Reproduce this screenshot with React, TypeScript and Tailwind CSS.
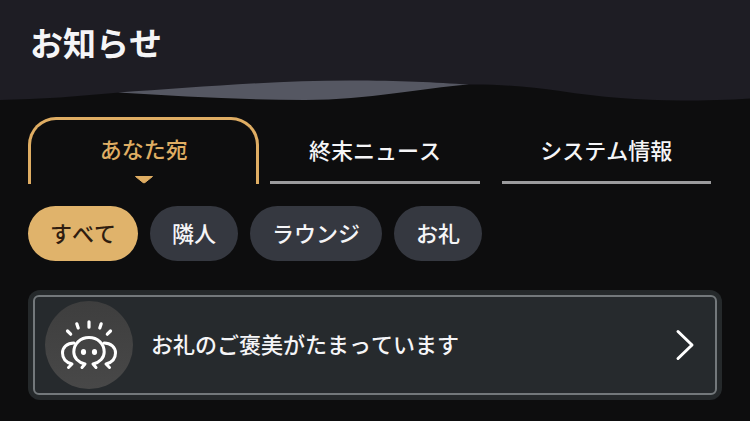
import { useState } from "react";

const tabs = ["あなた宛", "終末ニュース", "システム情報"];
const filters = ["すべて", "隣人", "ラウンジ", "お礼"];

function HeaderWave() {
  return (
    <svg
      className="block h-[22px] w-full"
      viewBox="0 0 750 22"
      preserveAspectRatio="none"
      aria-hidden="true"
    >
      <path
        fill="#1e1d24"
        d="M0 0H750V18.500C730 20 705 20.500 680 20.500C640 20.500 600 17 560 11C530 7 500 4 467 4.500L120 12.500C80 16 40 19.500 0 20Z"
      />
      <path
        fill="#555762"
        d="M118 12.500C190 8 270 .5 350 .5C400 .5 435 2.500 469 4.500C420 8 370 20 305 20C240 20 180 16 118 12.500Z"
      />
    </svg>
  );
}

function ThanksIcon() {
  return (
    <svg
      className="size-[88px]"
      viewBox="0 0 88 88"
      fill="none"
      stroke="#fff"
      strokeWidth="3"
      strokeLinecap="round"
      strokeLinejoin="round"
      aria-hidden="true"
    >
      <path
        strokeWidth="3.200"
        d="M22.500 30L25.700 33.200M31.800 22.800L33.200 27M44 20.800V26.200M56.200 22.800L54.800 27M65.500 30L62.300 33.200"
      />
      <path d="M37 66.500L40 63C33 61.500 28.800 56.500 28.800 51C28.800 42.500 35.500 36.500 44 36.500S59.200 42.500 59.200 51C59.200 56.500 55 61.500 48 63L51 66.500" />
      <path d="M29 42C22 42 17.500 46.500 17.500 52C17.500 57.500 21 61.500 27 63L23.500 66.500" />
      <path d="M59 42C66 42 70.500 46.500 70.500 52C70.500 57.500 67 61.500 61 63L64.500 66.500" />
      <ellipse cx="38.500" cy="51" rx="2.600" ry="3" fill="#fff" stroke="none" />
      <ellipse cx="49.500" cy="51" rx="2.600" ry="3" fill="#fff" stroke="none" />
    </svg>
  );
}

export default function App() {
  const [tab, setTab] = useState(0);
  const [filter, setFilter] = useState(0);

  return (
    <div className="min-h-screen bg-[#0d0d0e] font-['Noto_Sans_CJK_JP',sans-serif] text-[22px] leading-8 font-medium text-[#f5f5f7] [font-kerning:none]">
      <header>
        <div className="bg-[#1e1d24] px-[30px] pt-[18px] pb-[14px]">
          <h1 className="text-[33px] leading-12 font-bold">お知らせ</h1>
        </div>
        <HeaderWave />
      </header>

      <main className="px-7 pt-[15px] pb-5">
        <div role="tablist" className="grid grid-cols-3">
          {tabs.map((label, i) =>
            i === tab ? (
              <button
                key={label}
                role="tab"
                aria-selected
                className="flex h-[67px] flex-col items-center justify-between rounded-t-[28px] border-x-3 border-t-3 border-[#dfad63] pt-3 text-[#dfad63]"
              >
                <span>{label}</span>
                <svg className="h-[9px] w-5" viewBox="0 0 20 9" aria-hidden="true">
                  <path
                    d="M1.500 1.500H18.500L11 7.500Q10 8.200 9 7.500Z"
                    fill="#dfad63"
                    stroke="#dfad63"
                    strokeLinejoin="round"
                  />
                </svg>
              </button>
            ) : (
              <button
                key={label}
                role="tab"
                aria-selected={false}
                onClick={() => setTab(i)}
                className="mx-[11px] h-[67px] border-b-3 border-[#9b9b9d] pb-px"
              >
                {label}
              </button>
            ),
          )}
        </div>

        <div className="mt-[22px] flex flex-wrap gap-3">
          {filters.map((label, i) => (
            <button
              key={label}
              aria-pressed={i === filter}
              onClick={() => setFilter(i)}
              className={
                i === filter
                  ? "h-[55px] rounded-full bg-[#e0b36b] px-[22px] pb-1 text-[#2f1d10]"
                  : "h-[55px] rounded-full bg-[#353840] px-[22px] pb-1"
              }
            >
              {label}
            </button>
          ))}
        </div>

        <a href="#rewards" className="mt-[29px] block rounded-xl bg-[#25292b] p-[5px]">
          <span className="flex items-center rounded-md border-2 border-[#73787b] bg-[#262a2d] py-1 pr-5 pl-[10px]">
            <span className="rounded-full bg-linear-to-b from-[#3e3e3e] to-[#484848]">
              <ThanksIcon />
            </span>
            <span className="ml-[18px] flex-1 pb-1">お礼のご褒美がたまっています</span>
            <svg
              className="h-8 w-5"
              viewBox="0 0 20 32"
              fill="none"
              stroke="#fff"
              strokeWidth="3"
              strokeLinecap="round"
              strokeLinejoin="round"
              aria-hidden="true"
            >
              <path d="M3 2.500L17 16L3 29.500" />
            </svg>
          </span>
        </a>
      </main>
    </div>
  );
}
